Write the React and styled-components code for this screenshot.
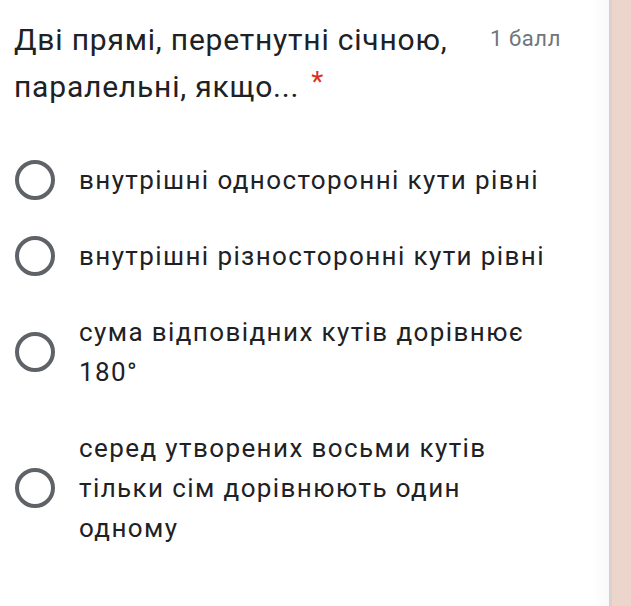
import styled, { createGlobalStyle } from "styled-components";

const GlobalStyle = createGlobalStyle`
  html, body {
    margin: 0;
    padding: 0;
    background: #ecd6cc;
  }
  body {
    font-family: Roboto, "Liberation Sans", sans-serif;
    color: #202124;
  }
`;

const options = [
  "внутрішні односторонні кути рівні",
  "внутрішні різносторонні кути рівні",
  "сума відповідних кутів дорівнює 180°",
  "серед утворених восьми кутів тільки сім дорівнюють один одному",
];

const App = () => {
  return (
    <>
      <GlobalStyle />
      <Page>
        <Card>
          <Header>
            <Title>
              Дві прямі, перетнутні січною, паралельні, якщо...
              <Star>*</Star>
            </Title>
            <Points>1 балл</Points>
          </Header>
          <Options>
            {options.map((text) => (
              <Option key={text}>
                <Radio />
                <Label>{text}</Label>
              </Option>
            ))}
          </Options>
        </Card>
        <Edge />
      </Page>
    </>
  );
};

export default App;

const Page = styled.div`
  display: flex;
  width: 631px;
  height: 606px;
  overflow: hidden;
`;

const Card = styled.div`
  width: 609px;
  height: 606px;
  background: linear-gradient(to right, #ffffff 0, #ffffff 592px, #f9f9f9 609px);
  padding: 16px 0 0 14px;
  box-sizing: border-box;
`;

const Edge = styled.div`
  width: 3px;
  background: #d9d1cf;
`;

const Header = styled.div`
  display: flex;
  align-items: flex-start;
`;

const Title = styled.div`
  width: 462px;
  font-size: 30px;
  line-height: 47px;
  letter-spacing: 0.8px;
  color: #202124;
`;

const Star = styled.span`
  display: inline-block;
  margin-left: 12px;
  color: #d93025;
  font-size: 28px;
  line-height: 30px;
  vertical-align: top;
  padding-top: 4px;
`;

const Points = styled.div`
  margin-left: 14px;
  padding-top: 8px;
  font-size: 22px;
  line-height: 30px;
  letter-spacing: 0.6px;
  color: #70757a;
  white-space: nowrap;
`;

const Options = styled.div`
  display: flex;
  flex-direction: column;
  gap: 36px;
  margin-top: 50px;
`;

const Option = styled.div`
  display: flex;
  align-items: center;
  gap: 24px;
`;

const Radio = styled.div`
  flex: none;
  width: 32px;
  height: 32px;
  border: 4px solid #5f6368;
  border-radius: 50%;
  margin-left: 1px;
`;

const Label = styled.div`
  width: 474px;
  font-size: 26px;
  line-height: 40px;
  letter-spacing: 1.4px;
  color: #202124;
`;
